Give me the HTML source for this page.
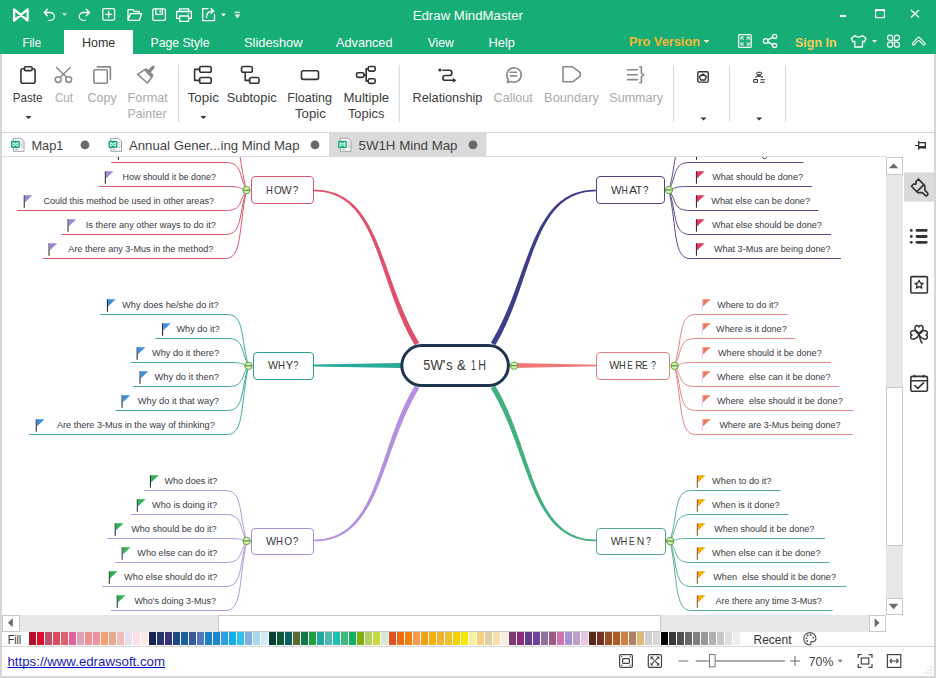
<!DOCTYPE html>
<html><head><meta charset="utf-8"><title>Edraw MindMaster</title>
<style>html,body{margin:0;padding:0;background:#fff;overflow:hidden}svg{display:block}text{font-family:"Liberation Sans",sans-serif;white-space:pre}</style>
</head><body>
<svg width="936" height="678" viewBox="0 0 936 678">
<rect x="0" y="0" width="936" height="54" fill="#16ad76"/>
<rect x="0" y="54" width="936" height="624" fill="#ffffff"/>
<rect x="64" y="30" width="69" height="24" fill="#ffffff"/>
<text x="412.7" y="19.9" font-size="13" fill="#ffffff" textLength="110.3" lengthAdjust="spacingAndGlyphs">Edraw MindMaster</text>
<text x="22.6" y="46.5" font-size="13" fill="#fff" textLength="18.4" lengthAdjust="spacingAndGlyphs">File</text>
<text x="82" y="46.5" font-size="13" fill="#333" textLength="33.3" lengthAdjust="spacingAndGlyphs">Home</text>
<text x="150.5" y="46.5" font-size="13" fill="#fff" textLength="59.1" lengthAdjust="spacingAndGlyphs">Page Style</text>
<text x="244" y="46.5" font-size="13" fill="#fff" textLength="58.5" lengthAdjust="spacingAndGlyphs">Slideshow</text>
<text x="336" y="46.5" font-size="13" fill="#fff" textLength="56.5" lengthAdjust="spacingAndGlyphs">Advanced</text>
<text x="427.7" y="46.5" font-size="13" fill="#fff" textLength="26.1" lengthAdjust="spacingAndGlyphs">View</text>
<text x="488.5" y="46.5" font-size="13" fill="#fff" textLength="26.4" lengthAdjust="spacingAndGlyphs">Help</text>
<text x="629" y="45.5" font-size="13" fill="#f5b731" font-weight="bold" textLength="71" lengthAdjust="spacingAndGlyphs">Pro Version</text>
<path d="M703.5,40 h6 l-3,3 z" fill="#f5e6c0"/>
<text x="795" y="46.7" font-size="13" fill="#f2cf5a" font-weight="bold" textLength="41.7" lengthAdjust="spacingAndGlyphs">Sign In</text>
<rect x="840" y="15" width="6" height="2" fill="#fff"/>
<rect x="875.6" y="9.6" width="8.8" height="8" fill="none" stroke="#fff" stroke-width="1.2"/>
<rect x="875" y="9" width="10" height="2" fill="#fff"/>
<path d="M911,10 L919,17.5 M919,10 L911,17.5" stroke="#fff" stroke-width="1.3"/>
<path d="M14.1,9.4 V20.6 L27.6,9.4 V20.6 Z" fill="none" stroke="#fff" stroke-width="2.3" stroke-linejoin="round"/>
<path d="M47.4,9.3 L44.2,12.5 L47.4,15.8 M44.2,12.5 H50.5 A3.9,3.9 0 0 1 50.5,20.3 H48.5" fill="none" stroke="#fff" stroke-width="1.3" stroke-linecap="round" stroke-linejoin="round"/>
<path d="M62,13.3 h5 l-2.5,2.8 z" fill="#cde9dc"/>
<path d="M86.3,9.3 L89.5,12.5 L86.3,15.8 M89.5,12.5 H83.2 A3.9,3.9 0 0 0 83.2,20.3 H85.2" fill="none" stroke="#fff" stroke-width="1.3" stroke-linecap="round" stroke-linejoin="round"/>
<rect x="102.8" y="8.6" width="11.8" height="11.6" rx="1.5" fill="none" stroke="#fff" stroke-width="1.3" stroke-linecap="round" stroke-linejoin="round"/>
<path d="M108.7,11.3 V17.3 M105.7,14.3 H111.7" fill="none" stroke="#fff" stroke-width="1.3" stroke-linecap="round" stroke-linejoin="round"/>
<path d="M139.3,13.2 V11.5 H134.3 L132.8,9.7 H128 V20.3 M128,20.3 L130.5,13.7 H141.6 L139.3,20.3 H128" fill="none" stroke="#fff" stroke-width="1.3" stroke-linecap="round" stroke-linejoin="round"/>
<rect x="152.8" y="8.8" width="12.6" height="11.6" rx="1.5" fill="none" stroke="#fff" stroke-width="1.3" stroke-linecap="round" stroke-linejoin="round"/>
<path d="M155.8,8.8 V14.3 H162.4 V8.8 M160.2,10.3 V12.3" fill="none" stroke="#fff" stroke-width="1.3" stroke-linecap="round" stroke-linejoin="round"/>
<path d="M179.6,11.5 V8.8 H188.6 V11.5 M179.6,18.3 H176.6 V11.5 H191.4 V18.3 H188.6" fill="none" stroke="#fff" stroke-width="1.3" stroke-linecap="round" stroke-linejoin="round"/>
<rect x="179.6" y="16" width="9" height="5.3" fill="none" stroke="#fff" stroke-width="1.3" stroke-linecap="round" stroke-linejoin="round"/>
<circle cx="188.3" cy="13.8" r="0.7" fill="#fff"/>
<path d="M208,8.7 H202.7 V20.7 H214.5 V14.5" fill="none" stroke="#fff" stroke-width="1.3" stroke-linecap="round" stroke-linejoin="round"/>
<path d="M206.5,17.5 C206.5,13.5 209,11 213.5,11 M211,8.5 L213.8,11 L211,13.5" fill="none" stroke="#fff" stroke-width="1.3" stroke-linecap="round" stroke-linejoin="round"/>
<path d="M221,13.6 h5 l-2.5,2.8 z" fill="#fff"/>
<path d="M234.8,12.4 h5.2" stroke="#e8f6ef" stroke-width="1.4"/><path d="M234.7,14.6 h5.4 l-2.7,4 z" fill="#fff"/>
<rect x="738.6" y="34.6" width="12.6" height="12.8" rx="1.2" fill="none" stroke="#fff" stroke-width="1.3" stroke-linecap="round" stroke-linejoin="round"/>
<path d="M741,39.8 V37 H743.8 M741.3,37.3 L743.8,39.8 M746.4,37 H749.2 V39.8 M748.9,37.3 L746.4,39.8 M741,42.2 V45 H743.8 M741.3,44.7 L743.8,42.2 M746.4,45 H749.2 V42.2 M748.9,44.7 L746.4,42.2" fill="none" stroke="#fff" stroke-width="1"/>
<circle cx="765.8" cy="41" r="2.4" fill="none" stroke="#fff" stroke-width="1.3" stroke-linecap="round" stroke-linejoin="round"/><circle cx="774.6" cy="36.4" r="2.1" fill="none" stroke="#fff" stroke-width="1.3" stroke-linecap="round" stroke-linejoin="round"/><circle cx="774.6" cy="45.6" r="2.1" fill="none" stroke="#fff" stroke-width="1.3" stroke-linecap="round" stroke-linejoin="round"/>
<path d="M767.9,39.9 L772.7,37.4 M767.9,42.1 L772.7,44.6" fill="none" stroke="#fff" stroke-width="1.3" stroke-linecap="round" stroke-linejoin="round"/>
<path d="M855,35.6 L851.3,38.5 L853,42 L854.8,41.2 V47 H862.5 V41.2 L864.3,42 L866,38.5 L862.3,35.6 C861,37.5 856.3,37.5 855,35.6 Z" fill="none" stroke="#fff" stroke-width="1.3" stroke-linecap="round" stroke-linejoin="round"/>
<path d="M872,40 h5 l-2.5,2.8 z" fill="#fff"/>
<path d="M892.6,40.300000000000004 H890.0500000000001 A2.55,2.55 0 1 1 892.6,37.75000000000001 Z" fill="none" stroke="#fff" stroke-width="1.2" stroke-linejoin="round"/>
<path d="M892.6,42.1 H890.0500000000001 A2.55,2.55 0 1 0 892.6,44.65 Z" fill="none" stroke="#fff" stroke-width="1.2" stroke-linejoin="round"/>
<path d="M894.4,40.300000000000004 H896.9499999999999 A2.55,2.55 0 1 0 894.4,37.75000000000001 Z" fill="none" stroke="#fff" stroke-width="1.2" stroke-linejoin="round"/>
<path d="M894.4,42.1 H896.9499999999999 A2.55,2.55 0 1 1 894.4,44.65 Z" fill="none" stroke="#fff" stroke-width="1.2" stroke-linejoin="round"/>
<path d="M913.5,43.8 L918.7,38.3 L923.9,43.8" fill="none" stroke="#fff" stroke-width="3.4" stroke-linejoin="round" stroke-linecap="round"/>
<path d="M913.5,43.8 L918.7,38.3 L923.9,43.8" fill="none" stroke="#16ad76" stroke-width="1.2" stroke-linejoin="round" stroke-linecap="round"/>
<rect x="0" y="132" width="936" height="1" fill="#d8d8d8"/>
<text x="12.8" y="101.5" font-size="13" fill="#3c3c3c" textLength="29.6" lengthAdjust="spacingAndGlyphs">Paste</text>
<text x="54.9" y="101.5" font-size="13" fill="#aaaaaa" textLength="18.0" lengthAdjust="spacingAndGlyphs">Cut</text>
<text x="87.5" y="101.5" font-size="13" fill="#aaaaaa" textLength="29.2" lengthAdjust="spacingAndGlyphs">Copy</text>
<text x="127.6" y="101.5" font-size="13" fill="#aaaaaa" textLength="40.3" lengthAdjust="spacingAndGlyphs">Format</text>
<text x="127.6" y="117.5" font-size="13" fill="#aaaaaa" textLength="38.9" lengthAdjust="spacingAndGlyphs">Painter</text>
<text x="187.6" y="101.5" font-size="13" fill="#3c3c3c" textLength="31.3" lengthAdjust="spacingAndGlyphs">Topic</text>
<text x="226.7" y="101.5" font-size="13" fill="#3c3c3c" textLength="50.0" lengthAdjust="spacingAndGlyphs">Subtopic</text>
<text x="287.3" y="101.5" font-size="13" fill="#3c3c3c" textLength="44.7" lengthAdjust="spacingAndGlyphs">Floating</text>
<text x="295" y="117.5" font-size="13" fill="#3c3c3c" textLength="30.8" lengthAdjust="spacingAndGlyphs">Topic</text>
<text x="343.5" y="101.5" font-size="13" fill="#3c3c3c" textLength="45.7" lengthAdjust="spacingAndGlyphs">Multiple</text>
<text x="347.9" y="117.5" font-size="13" fill="#3c3c3c" textLength="36.5" lengthAdjust="spacingAndGlyphs">Topics</text>
<text x="412.6" y="101.5" font-size="13" fill="#3c3c3c" textLength="69.7" lengthAdjust="spacingAndGlyphs">Relationship</text>
<text x="493.6" y="101.5" font-size="13" fill="#aaaaaa" textLength="39.2" lengthAdjust="spacingAndGlyphs">Callout</text>
<text x="544.1" y="101.5" font-size="13" fill="#aaaaaa" textLength="54.8" lengthAdjust="spacingAndGlyphs">Boundary</text>
<text x="609.3" y="101.5" font-size="13" fill="#aaaaaa" textLength="53.7" lengthAdjust="spacingAndGlyphs">Summary</text>
<rect x="178.1" y="65" width="1" height="57" fill="#d6d6d6"/>
<rect x="398.8" y="65" width="1" height="57" fill="#d6d6d6"/>
<rect x="673.0" y="65" width="1" height="57" fill="#d6d6d6"/>
<rect x="729.1" y="65" width="1" height="57" fill="#d6d6d6"/>
<rect x="785.0" y="65" width="1" height="57" fill="#d6d6d6"/>
<path d="M25.5,116.0 h6 l-3,3 z" fill="#333"/>
<path d="M200.3,116.0 h6 l-3,3 z" fill="#333"/>
<path d="M700.5,117.6 h6 l-3,3 z" fill="#333"/>
<path d="M756.2,117.6 h6 l-3,3 z" fill="#333"/>
<rect x="20.9" y="68.8" width="14.2" height="14.4" rx="2" fill="none" stroke="#333333" stroke-width="1.6" stroke-linecap="round" stroke-linejoin="round"/>
<rect x="24.5" y="66.8" width="7.6" height="3.8" rx="1.2" fill="#fff" stroke="#333333" stroke-width="1.6"/>
<path d="M56.5,67.5 L66.5,77.3 M70.3,67.5 L60.3,77.3" fill="none" stroke="#8a8a8a" stroke-width="1.6" stroke-linecap="round" stroke-linejoin="round"/><circle cx="58.2" cy="79.6" r="2.9" fill="none" stroke="#8a8a8a" stroke-width="1.6" stroke-linecap="round" stroke-linejoin="round"/><circle cx="68.7" cy="79.6" r="2.9" fill="none" stroke="#8a8a8a" stroke-width="1.6" stroke-linecap="round" stroke-linejoin="round"/>
<rect x="93.9" y="69.8" width="13.4" height="13.4" rx="1" fill="none" stroke="#8a8a8a" stroke-width="1.6" stroke-linecap="round" stroke-linejoin="round"/><path d="M97.4,66.9 H110.4 V79.2" fill="none" stroke="#8a8a8a" stroke-width="1.6" stroke-linecap="round" stroke-linejoin="round"/>
<path d="M137.6,74.3 L145.2,69.4 L152.4,76.2 L147.4,83 Z" fill="none" stroke="#8a8a8a" stroke-width="1.6" stroke-linecap="round" stroke-linejoin="round"/>
<path d="M144,70.3 L146.8,68.2 L153.6,74.8 L151,77.6 Z" fill="#8a8a8a"/>
<path d="M150,70.5 L153,67.3" stroke="#8a8a8a" stroke-width="3.4" stroke-linecap="round"/>
<rect x="199.6" y="66.5" width="11.6" height="5.8" rx="1.8" fill="none" stroke="#333333" stroke-width="1.6" stroke-linecap="round" stroke-linejoin="round"/><rect x="199.6" y="77.5" width="11.6" height="5.8" rx="1.8" fill="none" stroke="#333333" stroke-width="1.6" stroke-linecap="round" stroke-linejoin="round"/>
<path d="M199.6,69.4 H194.6 V80.4 H199.6" fill="none" stroke="#333333" stroke-width="1.6" stroke-linecap="round" stroke-linejoin="round"/>
<rect x="241.5" y="66.5" width="10.8" height="5.8" rx="1.8" fill="none" stroke="#333333" stroke-width="1.6" stroke-linecap="round" stroke-linejoin="round"/><rect x="249.6" y="77.5" width="9.4" height="5.8" rx="1.8" fill="none" stroke="#333333" stroke-width="1.6" stroke-linecap="round" stroke-linejoin="round"/>
<path d="M245.2,72.3 V80.4 H249.6" fill="none" stroke="#333333" stroke-width="1.6" stroke-linecap="round" stroke-linejoin="round"/>
<rect x="301.5" y="70.8" width="17" height="8.6" rx="1.8" fill="none" stroke="#333333" stroke-width="1.6" stroke-linecap="round" stroke-linejoin="round"/>
<rect x="356.5" y="72.8" width="7.5" height="4.6" rx="1.6" fill="none" stroke="#333333" stroke-width="1.6" stroke-linecap="round" stroke-linejoin="round"/><rect x="368.2" y="66.5" width="7" height="4.6" rx="1.6" fill="none" stroke="#333333" stroke-width="1.6" stroke-linecap="round" stroke-linejoin="round"/><rect x="368.2" y="78.8" width="7" height="4.6" rx="1.6" fill="none" stroke="#333333" stroke-width="1.6" stroke-linecap="round" stroke-linejoin="round"/>
<path d="M364,75.1 H366.2 M368.2,68.8 H366.2 V81.1 H368.2" fill="none" stroke="#333333" stroke-width="1.6" stroke-linecap="round" stroke-linejoin="round"/>
<circle cx="439.9" cy="70" r="1.6" fill="#333333"/>
<path d="M442.8,70.3 H449.3 A2.6,2.6 0 0 1 449.3,75.5 H445.3 A2.4,2.4 0 0 0 445.3,80.3 H453" fill="none" stroke="#333333" stroke-width="1.6" stroke-linecap="round" stroke-linejoin="round"/><path d="M452.8,77.9 L456.5,80.3 L452.8,82.7 Z" fill="#333333"/>
<path d="M507.2,82.6 L508.5,79.6 A7.2,7.2 0 1 1 511,81.5 Z" fill="none" stroke="#8a8a8a" stroke-width="1.6" stroke-linecap="round" stroke-linejoin="round"/><path d="M510.3,72.2 H516.5 M510.3,75.9 H516.5" fill="none" stroke="#8a8a8a" stroke-width="1.6" stroke-linecap="round" stroke-linejoin="round"/>
<path d="M563,66.8 H572.6 L580.2,72.7 V76.4 L572.6,81.8 H563 Z" fill="none" stroke="#8a8a8a" stroke-width="1.6" stroke-linecap="round" stroke-linejoin="round"/>
<path d="M627.5,69.7 H637.5 M627.5,74.8 H637.5 M627.5,79.6 H637.5" fill="none" stroke="#8a8a8a" stroke-width="1.6" stroke-linecap="round" stroke-linejoin="round"/><path d="M639.8,66.8 H641.4 V73.2 L643.8,74.8 L641.4,76.4 V82.6 H639.8" fill="none" stroke="#8a8a8a" stroke-width="1.6" stroke-linecap="round" stroke-linejoin="round"/>
<rect x="697.8" y="71.7" width="10.4" height="10.4" rx="1" fill="none" stroke="#333333" stroke-width="1.4"/>
<path d="M702.9,74.1 L706.4,76.6 L705,80 H700.8 L699.4,76.6 Z" fill="none" stroke="#333333" stroke-width="1.3" stroke-linejoin="round"/>
<rect x="756.8" y="72.3" width="4.6" height="2.3" rx="0.6" fill="none" stroke="#333333" stroke-width="1"/>
<path d="M758.2,74.6 H760 L762.4,77 H755.8 Z" fill="#555"/><circle cx="755.9" cy="77.1" r="0.8" fill="#333333"/><circle cx="762.3" cy="77.1" r="0.8" fill="#333333"/>
<rect x="753.7" y="79.5" width="3.8" height="2.8" rx="0.4" fill="none" stroke="#333333" stroke-width="1.1"/>
<path d="M760.3,79.7 H764.8 M760.3,82.2 H764.8" stroke="#333333" stroke-width="1.1"/>
<rect x="2" y="133" width="932" height="23" fill="#ffffff"/>
<rect x="329" y="132.5" width="157.5" height="23.5" fill="#dadada"/>
<rect x="0" y="156" width="886" height="1" fill="#dcdcdc"/>
<path d="M13.3,138.3 H21 L24,141.3 V151.3 H13.3 Z" fill="#fff" stroke="#a0a0a0" stroke-width="1"/>
<rect x="11" y="140.8" width="8.9" height="7.2" rx="1" fill="#1aa872"/>
<path d="M13,142.5 V146.3 L17.9,142.5 V146.3 Z" fill="none" stroke="#c8fff0" stroke-width="1.1" stroke-linejoin="round"/>
<path d="M20.8,142.8 H23 M20.8,145 H23 M20.8,147.2 H23 M15,149.5 H18" stroke="#a8a8a8" stroke-width="0.9"/>
<path d="M110.8,138.3 H118.5 L121.5,141.3 V151.3 H110.8 Z" fill="#fff" stroke="#a0a0a0" stroke-width="1"/>
<rect x="108.5" y="140.8" width="8.9" height="7.2" rx="1" fill="#1aa872"/>
<path d="M110.5,142.5 V146.3 L115.4,142.5 V146.3 Z" fill="none" stroke="#c8fff0" stroke-width="1.1" stroke-linejoin="round"/>
<path d="M118.3,142.8 H120.5 M118.3,145 H120.5 M118.3,147.2 H120.5 M112.5,149.5 H115.5" stroke="#a8a8a8" stroke-width="0.9"/>
<path d="M340.3,138.3 H348 L351,141.3 V151.3 H340.3 Z" fill="#fff" stroke="#a0a0a0" stroke-width="1"/>
<rect x="338" y="140.8" width="8.9" height="7.2" rx="1" fill="#1aa872"/>
<path d="M340,142.5 V146.3 L344.9,142.5 V146.3 Z" fill="none" stroke="#c8fff0" stroke-width="1.1" stroke-linejoin="round"/>
<path d="M347.8,142.8 H350 M347.8,145 H350 M347.8,147.2 H350 M342,149.5 H345" stroke="#a8a8a8" stroke-width="0.9"/>
<text x="31.4" y="149.5" font-size="13" fill="#444" textLength="32" lengthAdjust="spacingAndGlyphs">Map1</text>
<circle cx="85" cy="144.9" r="4.4" fill="#6a6a6a"/>
<text x="129" y="149.5" font-size="13" fill="#444" textLength="170.5" lengthAdjust="spacingAndGlyphs">Annual Gener...ing Mind Map</text>
<circle cx="315" cy="144.9" r="4.4" fill="#6a6a6a"/>
<text x="358.5" y="149.5" font-size="13" fill="#444" textLength="99" lengthAdjust="spacingAndGlyphs">5W1H Mind Map</text>
<circle cx="473" cy="144.9" r="4.4" fill="#6a6a6a"/>
<rect x="915" y="145" width="3.5" height="1" fill="#333"/><rect x="918" y="141" width="1.3" height="8.7" fill="#333"/><rect x="918" y="142" width="8" height="1.3" fill="#333"/><rect x="924.7" y="142" width="1.3" height="6.5" fill="#333"/><rect x="918" y="146" width="8" height="2.5" fill="#333"/>
<rect x="903" y="157" width="31" height="490" fill="#ffffff"/>
<rect x="904" y="172.4" width="30" height="29.2" fill="#dadada"/>
<g transform="translate(920.8,188.6) rotate(-45)"><path d="M-1.7,7.6 V4.6 C-1.7,2.6 -5,2.4 -5,0 V-8.3 H-1.8 L-0.2,-6.6 L1.4,-8.3 H5 V0 C5,2.4 1.7,2.6 1.7,4.6 V7.6 A1.7,1.7 0 0 1 -1.7,7.6 Z" fill="none" stroke="#333333" stroke-width="1.7" stroke-linejoin="round"/><path d="M-5,-0.6 H5" stroke="#333333" stroke-width="1.7"/></g>
<circle cx="911.3" cy="230.4" r="1.4" fill="#333333"/><rect x="915.6" y="229.0" width="12" height="2.8" rx="1.4" fill="#333333"/>
<circle cx="911.3" cy="236.5" r="1.4" fill="#333333"/><rect x="915.6" y="235.1" width="12" height="2.8" rx="1.4" fill="#333333"/>
<circle cx="911.3" cy="242.3" r="1.4" fill="#333333"/><rect x="915.6" y="240.9" width="12" height="2.8" rx="1.4" fill="#333333"/>
<rect x="910.8" y="276.6" width="16.6" height="16.4" rx="1" fill="none" stroke="#333333" stroke-width="1.6"/>
<path d="M919.1,280.3 L920.4,283 L923.3,283.3 L921.1,285.2 L921.8,288.1 L919.1,286.6 L916.4,288.1 L917.1,285.2 L914.9,283.3 L917.8,283 Z" fill="none" stroke="#333333" stroke-width="1.3" stroke-linejoin="round"/>
<path d="M919,334 C914,332 914,325.5 917,325.5 C918.5,325.5 919,327 919,327 C919,327 919.5,325.5 921,325.5 C924,325.5 924,332 919,334 Z" fill="none" stroke="#333333" stroke-width="1.5" stroke-linejoin="round"/>
<path d="M919,334 C917,329.5 910.6,329.5 910.6,333 C910.6,334.5 912,335 912,335 C912,335 910.6,335.7 910.6,337 C910.6,340.5 917,340 919,334 Z" fill="none" stroke="#333333" stroke-width="1.5" stroke-linejoin="round"/>
<path d="M919,334 C921,329.5 927.4,329.5 927.4,333 C927.4,334.5 926,335 926,335 C926,335 927.4,335.7 927.4,337 C927.4,340.5 921,340 919,334 Z" fill="none" stroke="#333333" stroke-width="1.5" stroke-linejoin="round"/>
<path d="M919,334 C919.5,338 920.5,341 922,343" fill="none" stroke="#333333" stroke-width="1.5" stroke-linecap="round"/>
<rect x="910.8" y="376.4" width="16.6" height="14.8" rx="1.5" fill="none" stroke="#333333" stroke-width="1.6"/>
<path d="M910.8,380.8 H927.4 M914.5,374.8 V377.5 M923.7,374.8 V377.5" stroke="#333333" stroke-width="1.6"/>
<path d="M914.8,385.5 L917.8,388.3 L923.5,382.8" fill="none" stroke="#333333" stroke-width="1.6" stroke-linejoin="round" stroke-linecap="round"/>
<rect x="886" y="157" width="17" height="458" fill="#e8e8e8"/>
<rect x="886.5" y="157.5" width="16" height="17" fill="#fff" stroke="#c8c8c8"/>
<path d="M888.8,168.3 L898.4,168.3 L893.6,163.6 Z" fill="#6a6a6a"/>
<rect x="886.5" y="387.5" width="16" height="158" fill="#fff" stroke="#c8c8c8"/>
<rect x="886.5" y="598.5" width="16" height="16" fill="#fff" stroke="#c8c8c8"/>
<path d="M888.8,603.8 L898.4,603.8 L893.6,609.2 Z" fill="#6a6a6a"/>
<rect x="2" y="615" width="884" height="17" fill="#e8e8e8"/>
<rect x="2.5" y="615.5" width="17" height="16" fill="#fff" stroke="#c8c8c8"/>
<path d="M12.8,618.2 L7.9,622.8 L12.8,627.3 Z" fill="#6a6a6a"/>
<rect x="218.5" y="615.5" width="442" height="16" fill="#fff" stroke="#c8c8c8"/>
<rect x="869.5" y="615.5" width="16" height="16" fill="#fff" stroke="#c8c8c8"/>
<path d="M874.6,618.2 L879.6,622.8 L874.6,627.4 Z" fill="#6a6a6a"/>
<text x="7.7" y="643.6" font-size="12.8" fill="#333" textLength="13.5" lengthAdjust="spacingAndGlyphs">Fill</text>
<rect x="29" y="632" width="7" height="13" fill="#b5102a"/>
<rect x="37" y="632" width="7" height="13" fill="#d9102a"/>
<rect x="45" y="632" width="7" height="13" fill="#c0506a"/>
<rect x="53" y="632" width="7" height="13" fill="#e04a60"/>
<rect x="61" y="632" width="7" height="13" fill="#e06070"/>
<rect x="69" y="632" width="7" height="13" fill="#e0609a"/>
<rect x="77" y="632" width="7" height="13" fill="#e0a0b8"/>
<rect x="85" y="632" width="7" height="13" fill="#f09090"/>
<rect x="93" y="632" width="7" height="13" fill="#f090a0"/>
<rect x="101" y="632" width="7" height="13" fill="#f8a070"/>
<rect x="109" y="632" width="7" height="13" fill="#eaa890"/>
<rect x="117" y="632" width="7" height="13" fill="#f0c0b8"/>
<rect x="125" y="632" width="7" height="13" fill="#e8e0f0"/>
<rect x="133" y="632" width="7" height="13" fill="#fde0e8"/>
<rect x="141" y="632" width="7" height="13" fill="#fde8e8"/>
<rect x="149" y="632" width="7" height="13" fill="#1a2450"/>
<rect x="157" y="632" width="7" height="13" fill="#283470"/>
<rect x="165" y="632" width="7" height="13" fill="#3a3080"/>
<rect x="173" y="632" width="7" height="13" fill="#1a4888"/>
<rect x="181" y="632" width="7" height="13" fill="#1a5fa0"/>
<rect x="189" y="632" width="7" height="13" fill="#3a58a0"/>
<rect x="197" y="632" width="7" height="13" fill="#5078c0"/>
<rect x="205" y="632" width="7" height="13" fill="#1a80c8"/>
<rect x="213" y="632" width="7" height="13" fill="#1a88d0"/>
<rect x="221" y="632" width="7" height="13" fill="#30a0e0"/>
<rect x="229" y="632" width="7" height="13" fill="#10b0f0"/>
<rect x="237" y="632" width="7" height="13" fill="#30c0f0"/>
<rect x="245" y="632" width="7" height="13" fill="#80b0e0"/>
<rect x="253" y="632" width="7" height="13" fill="#a8d8f0"/>
<rect x="261" y="632" width="7" height="13" fill="#d0ecf8"/>
<rect x="269" y="632" width="7" height="13" fill="#0a4030"/>
<rect x="277" y="632" width="7" height="13" fill="#0a5a38"/>
<rect x="285" y="632" width="7" height="13" fill="#0a6060"/>
<rect x="293" y="632" width="7" height="13" fill="#5a6a30"/>
<rect x="301" y="632" width="7" height="13" fill="#107a48"/>
<rect x="309" y="632" width="7" height="13" fill="#20a040"/>
<rect x="317" y="632" width="7" height="13" fill="#20a8a0"/>
<rect x="325" y="632" width="7" height="13" fill="#50b8b0"/>
<rect x="333" y="632" width="7" height="13" fill="#20c0b0"/>
<rect x="341" y="632" width="7" height="13" fill="#40b880"/>
<rect x="349" y="632" width="7" height="13" fill="#10b060"/>
<rect x="357" y="632" width="7" height="13" fill="#80b010"/>
<rect x="365" y="632" width="7" height="13" fill="#b0d060"/>
<rect x="373" y="632" width="7" height="13" fill="#c8d840"/>
<rect x="381" y="632" width="7" height="13" fill="#d8e8d0"/>
<rect x="389" y="632" width="7" height="13" fill="#e05020"/>
<rect x="397" y="632" width="7" height="13" fill="#f06a10"/>
<rect x="405" y="632" width="7" height="13" fill="#f08010"/>
<rect x="413" y="632" width="7" height="13" fill="#f89850"/>
<rect x="421" y="632" width="7" height="13" fill="#f0a010"/>
<rect x="429" y="632" width="7" height="13" fill="#f8b010"/>
<rect x="437" y="632" width="7" height="13" fill="#f8b030"/>
<rect x="445" y="632" width="7" height="13" fill="#f0c030"/>
<rect x="453" y="632" width="7" height="13" fill="#f8d000"/>
<rect x="461" y="632" width="7" height="13" fill="#f8e800"/>
<rect x="469" y="632" width="7" height="13" fill="#f8f0a0"/>
<rect x="477" y="632" width="7" height="13" fill="#f8d080"/>
<rect x="485" y="632" width="7" height="13" fill="#e0d0a0"/>
<rect x="493" y="632" width="7" height="13" fill="#f8e0b0"/>
<rect x="501" y="632" width="7" height="13" fill="#fdeee0"/>
<rect x="509" y="632" width="7" height="13" fill="#803870"/>
<rect x="517" y="632" width="7" height="13" fill="#902a80"/>
<rect x="525" y="632" width="7" height="13" fill="#6a3a90"/>
<rect x="533" y="632" width="7" height="13" fill="#7040a0"/>
<rect x="541" y="632" width="7" height="13" fill="#9070a0"/>
<rect x="549" y="632" width="7" height="13" fill="#a05880"/>
<rect x="557" y="632" width="7" height="13" fill="#d070b0"/>
<rect x="565" y="632" width="7" height="13" fill="#a890d8"/>
<rect x="573" y="632" width="7" height="13" fill="#c0a0c8"/>
<rect x="581" y="632" width="7" height="13" fill="#e8c8e0"/>
<rect x="589" y="632" width="7" height="13" fill="#5a2818"/>
<rect x="597" y="632" width="7" height="13" fill="#7a3020"/>
<rect x="605" y="632" width="7" height="13" fill="#985020"/>
<rect x="613" y="632" width="7" height="13" fill="#b05a20"/>
<rect x="621" y="632" width="7" height="13" fill="#d08040"/>
<rect x="629" y="632" width="7" height="13" fill="#b08060"/>
<rect x="637" y="632" width="7" height="13" fill="#e0b878"/>
<rect x="645" y="632" width="7" height="13" fill="#d0d0d0"/>
<rect x="653" y="632" width="7" height="13" fill="#d8d8d8"/>
<rect x="661" y="632" width="7" height="13" fill="#000000"/>
<rect x="669" y="632" width="7" height="13" fill="#383838"/>
<rect x="677" y="632" width="7" height="13" fill="#505050"/>
<rect x="685" y="632" width="7" height="13" fill="#686868"/>
<rect x="693" y="632" width="7" height="13" fill="#808080"/>
<rect x="701" y="632" width="7" height="13" fill="#989898"/>
<rect x="709" y="632" width="7" height="13" fill="#b0b0b0"/>
<rect x="717" y="632" width="7" height="13" fill="#c8c8c8"/>
<rect x="725" y="632" width="7" height="13" fill="#e0e0e0"/>
<rect x="733" y="632" width="7" height="13" fill="#eeeeee"/>
<rect x="741" y="632" width="7" height="13" fill="#ffffff"/>
<text x="753.5" y="643.6" font-size="13" fill="#333" textLength="38" lengthAdjust="spacingAndGlyphs">Recent</text>
<path d="M810,632.7 C813.5,632.7 815.9,635.3 815.9,638.4 C815.9,641.2 813.8,641.9 812.3,641.6 C811,641.4 810.3,642.3 810.8,643.3 C811.2,644.3 810.5,644.8 809.5,644.8 C806.2,644.8 803.7,642 803.7,638.6 C803.7,635.2 806.5,632.7 810,632.7 Z" fill="none" stroke="#555" stroke-width="1.2"/>
<circle cx="806.4" cy="638.2" r="0.95" fill="#555"/>
<circle cx="807.7" cy="635.5" r="0.95" fill="#555"/>
<circle cx="810.6" cy="635" r="0.95" fill="#555"/>
<circle cx="813.2" cy="637.6" r="0.95" fill="#555"/>
<circle cx="807.2" cy="641" r="0.95" fill="#555"/>
<rect x="2" y="646" width="932" height="1" fill="#d8d8d8"/>
<rect x="0" y="676" width="936" height="2" fill="#d6d6d6"/>
<text x="7.5" y="665.5" font-size="13" fill="#1c1cb0" textLength="157.5" lengthAdjust="spacingAndGlyphs">https://www.edrawsoft.com</text>
<rect x="7.5" y="667" width="157.5" height="1" fill="#0000d0"/>
<rect x="619.6" y="654.6" width="12.8" height="12.8" rx="1.3" fill="none" stroke="#444" stroke-width="1.2"/><rect x="622.6" y="658.7" width="6.8" height="4.6" rx="0.8" fill="none" stroke="#444" stroke-width="1.2"/><path d="M621.5,657.5 V656.5 H622.5 M630.5,657.5 V656.5 H629.5 M621.5,664.5 V665.5 H622.5 M630.5,664.5 V665.5 H629.5" fill="none" stroke="#444" stroke-width="0.8"/>
<rect x="648.3" y="654.6" width="13.2" height="12.8" rx="1.3" fill="none" stroke="#444" stroke-width="1.2"/><path d="M650.5,656.6 h3 l-3,3 z M659.3,656.6 h-3 l3,3 z M650.5,665.4 h3 l-3,-3 z M659.3,665.4 h-3 l3,-3 z" fill="#444"/><path d="M651.5,657.6 L654.5,660.6 M658.3,657.6 L655.3,660.6 M651.5,664.4 L654.5,661.4 M658.3,664.4 L655.3,661.4" stroke="#444" stroke-width="1.2"/>
<rect x="678.4" y="660.5" width="9.8" height="1" fill="#666"/>
<rect x="695.7" y="660.3" width="89.2" height="1.4" fill="#8a8a8a"/>
<rect x="709.5" y="654.5" width="5.6" height="12.3" fill="#fff" stroke="#777" stroke-width="1"/>
<path d="M790,661 H800 M795,656 V666" stroke="#666" stroke-width="1"/>
<text x="808.8" y="666" font-size="13" fill="#444" textLength="24.5" lengthAdjust="spacingAndGlyphs">70%</text>
<path d="M837.7,659.8 h5 l-2.5,2.8 z" fill="#777"/>
<path d="M858.2,658 V654.6 H861.6 M868.6,654.6 H872 V658 M872,664 V667.4 H868.6 M861.6,667.4 H858.2 V664" fill="none" stroke="#444" stroke-width="1.2"/><rect x="861.3" y="658" width="7.5" height="6" fill="none" stroke="#444" stroke-width="1.2"/>
<rect x="887.4" y="654.6" width="13.4" height="12.8" fill="none" stroke="#444" stroke-width="1.2"/><path d="M889.8,661 H898.4 M889.8,661 l2,-2 M889.8,661 l2,2 M898.4,661 l-2,-2 M898.4,661 l-2,2" fill="none" stroke="#444" stroke-width="1.1"/>
<rect x="930.4" y="672.4" width="1.2" height="1.2" fill="#c0c0c0"/>
<rect x="927.4" y="672.4" width="1.2" height="1.2" fill="#c0c0c0"/>
<rect x="924.4" y="672.4" width="1.2" height="1.2" fill="#c0c0c0"/>
<rect x="930.4" y="669.4" width="1.2" height="1.2" fill="#c0c0c0"/>
<rect x="927.4" y="669.4" width="1.2" height="1.2" fill="#c0c0c0"/>
<rect x="930.4" y="666.4" width="1.2" height="1.2" fill="#c0c0c0"/>
<rect x="0" y="54" width="2" height="624" fill="#d6d6d6"/>
<rect x="934" y="54" width="2" height="624" fill="#d6d6d6"/>
<defs><clipPath id="cv"><rect x="2" y="157" width="884" height="458"/></clipPath></defs>
<g clip-path="url(#cv)">
<path d="M314.00,191.30 L317.20,191.40 L320.29,191.65 L323.27,192.04 L326.14,192.56 L328.91,193.22 L331.57,194.00 L334.14,194.92 L336.61,195.95 L338.99,197.11 L341.29,198.38 L343.50,199.76 L345.63,201.26 L347.69,202.86 L349.67,204.57 L351.58,206.38 L353.43,208.29 L355.21,210.30 L356.94,212.40 L358.61,214.59 L360.22,216.88 L361.79,219.24 L363.30,221.69 L364.77,224.22 L366.20,226.83 L367.59,229.51 L368.94,232.26 L370.26,235.08 L371.55,237.96 L372.82,240.90 L374.05,243.90 L375.27,246.96 L376.47,250.07 L377.65,253.22 L378.82,256.43 L379.98,259.67 L381.13,262.95 L382.28,266.27 L383.43,269.63 L384.58,273.01 L385.74,276.42 L386.91,279.85 L388.08,283.30 L389.27,286.77 L390.48,290.26 L391.71,293.75 L392.97,297.25 L394.25,300.76 L395.56,304.27 L396.90,307.78 L398.28,311.28 L399.70,314.77 L401.17,318.26 L402.67,321.73 L404.23,325.18 L405.84,328.61 L407.50,332.02 L409.23,335.40 L411.01,338.75 L412.86,342.07 L414.78,345.35 L419.22,342.65 L417.30,339.49 L415.45,336.29 L413.66,333.05 L411.92,329.77 L410.24,326.46 L408.61,323.12 L407.03,319.76 L405.49,316.37 L404.00,312.96 L402.54,309.54 L401.12,306.10 L399.74,302.65 L398.38,299.20 L397.06,295.74 L395.75,292.28 L394.48,288.83 L393.21,285.38 L391.97,281.94 L390.74,278.51 L389.52,275.10 L388.30,271.71 L387.09,268.34 L385.89,265.00 L384.67,261.69 L383.46,258.41 L382.23,255.16 L381.00,251.95 L379.75,248.79 L378.48,245.67 L377.20,242.60 L375.88,239.58 L374.55,236.61 L373.18,233.71 L371.78,230.86 L370.35,228.08 L368.87,225.37 L367.35,222.73 L365.79,220.17 L364.18,217.68 L362.52,215.27 L360.80,212.95 L359.03,210.72 L357.19,208.58 L355.29,206.53 L353.32,204.59 L351.29,202.74 L349.18,201.01 L346.99,199.38 L344.73,197.87 L342.39,196.47 L339.96,195.20 L337.45,194.05 L334.85,193.03 L332.16,192.14 L329.38,191.38 L326.51,190.76 L323.53,190.28 L320.46,189.94 L317.28,189.74 L314.00,189.70 Z" fill="#e0506a"/>
<path d="M596.00,189.70 L592.72,189.74 L589.54,189.94 L586.47,190.28 L583.49,190.76 L580.62,191.38 L577.84,192.14 L575.15,193.03 L572.55,194.05 L570.04,195.20 L567.61,196.47 L565.27,197.87 L563.01,199.38 L560.82,201.01 L558.71,202.74 L556.68,204.59 L554.71,206.53 L552.81,208.58 L550.97,210.72 L549.20,212.95 L547.48,215.27 L545.82,217.68 L544.21,220.17 L542.65,222.73 L541.13,225.37 L539.65,228.08 L538.22,230.86 L536.82,233.71 L535.45,236.61 L534.12,239.58 L532.80,242.60 L531.52,245.67 L530.25,248.79 L529.00,251.95 L527.77,255.16 L526.54,258.41 L525.33,261.69 L524.11,265.00 L522.91,268.34 L521.70,271.71 L520.48,275.10 L519.26,278.51 L518.03,281.94 L516.79,285.38 L515.52,288.83 L514.25,292.28 L512.94,295.74 L511.62,299.20 L510.26,302.65 L508.88,306.10 L507.46,309.54 L506.00,312.96 L504.51,316.37 L502.97,319.76 L501.39,323.12 L499.76,326.46 L498.08,329.77 L496.34,333.05 L494.55,336.29 L492.70,339.49 L490.78,342.65 L495.22,345.35 L497.14,342.07 L498.99,338.75 L500.77,335.40 L502.50,332.02 L504.16,328.61 L505.77,325.18 L507.33,321.73 L508.83,318.26 L510.30,314.77 L511.72,311.28 L513.10,307.78 L514.44,304.27 L515.75,300.76 L517.03,297.25 L518.29,293.75 L519.52,290.26 L520.73,286.77 L521.92,283.30 L523.09,279.85 L524.26,276.42 L525.42,273.01 L526.57,269.63 L527.72,266.27 L528.87,262.95 L530.02,259.67 L531.18,256.43 L532.35,253.22 L533.53,250.07 L534.73,246.96 L535.95,243.90 L537.18,240.90 L538.45,237.96 L539.74,235.08 L541.06,232.26 L542.41,229.51 L543.80,226.83 L545.23,224.22 L546.70,221.69 L548.21,219.24 L549.78,216.88 L551.39,214.59 L553.06,212.40 L554.79,210.30 L556.57,208.29 L558.42,206.38 L560.33,204.57 L562.31,202.86 L564.37,201.26 L566.50,199.76 L568.71,198.38 L571.01,197.11 L573.39,195.95 L575.86,194.92 L578.43,194.00 L581.09,193.22 L583.86,192.56 L586.73,192.04 L589.71,191.65 L592.80,191.40 L596.00,191.30 Z" fill="#3c3f88"/>
<path d="M314.00,541.30 L317.28,541.26 L320.46,541.06 L323.53,540.72 L326.51,540.24 L329.38,539.62 L332.16,538.86 L334.85,537.97 L337.45,536.95 L339.96,535.80 L342.39,534.53 L344.73,533.13 L346.99,531.62 L349.18,529.99 L351.29,528.26 L353.32,526.41 L355.29,524.47 L357.19,522.42 L359.03,520.28 L360.80,518.05 L362.52,515.73 L364.18,513.32 L365.79,510.83 L367.35,508.27 L368.87,505.63 L370.35,502.92 L371.78,500.14 L373.18,497.29 L374.55,494.39 L375.88,491.42 L377.20,488.40 L378.48,485.33 L379.75,482.21 L381.00,479.05 L382.23,475.84 L383.46,472.59 L384.67,469.31 L385.89,466.00 L387.09,462.66 L388.30,459.29 L389.52,455.90 L390.74,452.49 L391.97,449.06 L393.21,445.62 L394.48,442.17 L395.75,438.72 L397.06,435.26 L398.38,431.80 L399.74,428.35 L401.12,424.90 L402.54,421.46 L404.00,418.04 L405.49,414.63 L407.03,411.24 L408.61,407.88 L410.24,404.54 L411.92,401.23 L413.66,397.95 L415.45,394.71 L417.30,391.51 L419.22,388.35 L414.78,385.65 L412.86,388.93 L411.01,392.25 L409.23,395.60 L407.50,398.98 L405.84,402.39 L404.23,405.82 L402.67,409.27 L401.17,412.74 L399.70,416.23 L398.28,419.72 L396.90,423.22 L395.56,426.73 L394.25,430.24 L392.97,433.75 L391.71,437.25 L390.48,440.74 L389.27,444.23 L388.08,447.70 L386.91,451.15 L385.74,454.58 L384.58,457.99 L383.43,461.37 L382.28,464.73 L381.13,468.05 L379.98,471.33 L378.82,474.57 L377.65,477.78 L376.47,480.93 L375.27,484.04 L374.05,487.10 L372.82,490.10 L371.55,493.04 L370.26,495.92 L368.94,498.74 L367.59,501.49 L366.20,504.17 L364.77,506.78 L363.30,509.31 L361.79,511.76 L360.22,514.12 L358.61,516.41 L356.94,518.60 L355.21,520.70 L353.43,522.71 L351.58,524.62 L349.67,526.43 L347.69,528.14 L345.63,529.74 L343.50,531.24 L341.29,532.62 L338.99,533.89 L336.61,535.05 L334.14,536.08 L331.57,537.00 L328.91,537.78 L326.14,538.44 L323.27,538.96 L320.29,539.35 L317.20,539.60 L314.00,539.70 Z" fill="#b48ee0"/>
<path d="M596.00,539.70 L592.80,539.60 L589.71,539.35 L586.73,538.96 L583.86,538.44 L581.09,537.78 L578.43,537.00 L575.86,536.08 L573.39,535.05 L571.01,533.89 L568.71,532.62 L566.50,531.24 L564.37,529.74 L562.31,528.14 L560.33,526.43 L558.42,524.62 L556.57,522.71 L554.79,520.70 L553.06,518.60 L551.39,516.41 L549.78,514.12 L548.21,511.76 L546.70,509.31 L545.23,506.78 L543.80,504.17 L542.41,501.49 L541.06,498.74 L539.74,495.92 L538.45,493.04 L537.18,490.10 L535.95,487.10 L534.73,484.04 L533.53,480.93 L532.35,477.78 L531.18,474.57 L530.02,471.33 L528.87,468.05 L527.72,464.73 L526.57,461.37 L525.42,457.99 L524.26,454.58 L523.09,451.15 L521.92,447.70 L520.73,444.23 L519.52,440.74 L518.29,437.25 L517.03,433.75 L515.75,430.24 L514.44,426.73 L513.10,423.22 L511.72,419.72 L510.30,416.23 L508.83,412.74 L507.33,409.27 L505.77,405.82 L504.16,402.39 L502.50,398.98 L500.77,395.60 L498.99,392.25 L497.14,388.93 L495.22,385.65 L490.78,388.35 L492.70,391.51 L494.55,394.71 L496.34,397.95 L498.08,401.23 L499.76,404.54 L501.39,407.88 L502.97,411.24 L504.51,414.63 L506.00,418.04 L507.46,421.46 L508.88,424.90 L510.26,428.35 L511.62,431.80 L512.94,435.26 L514.25,438.72 L515.52,442.17 L516.79,445.62 L518.03,449.06 L519.26,452.49 L520.48,455.90 L521.70,459.29 L522.91,462.66 L524.11,466.00 L525.33,469.31 L526.54,472.59 L527.77,475.84 L529.00,479.05 L530.25,482.21 L531.52,485.33 L532.80,488.40 L534.12,491.42 L535.45,494.39 L536.82,497.29 L538.22,500.14 L539.65,502.92 L541.13,505.63 L542.65,508.27 L544.21,510.83 L545.82,513.32 L547.48,515.73 L549.20,518.05 L550.97,520.28 L552.81,522.42 L554.71,524.47 L556.68,526.41 L558.71,528.26 L560.82,529.99 L563.01,531.62 L565.27,533.13 L567.61,534.53 L570.04,535.80 L572.55,536.95 L575.15,537.97 L577.84,538.86 L580.62,539.62 L583.49,540.24 L586.47,540.72 L589.54,541.06 L592.72,541.26 L596.00,541.30 Z" fill="#3fb07e"/>
<path d="M314,364.6 L401,362.9 L401,368.1 L314,366.4 Z" fill="#2aaa98"/>
<path d="M514,362.9 L596.5,364.8 L596.5,366.2 L514,368.1 Z" fill="#f07878"/>
<rect x="401.8" y="345.6" width="106.6" height="40" rx="20" fill="#fff" stroke="#1e3550" stroke-width="3"/>
<text transform="translate(423.19,369.8) scale(0.902,1)" font-size="14" fill="#3a3a3a">5</text>
<text transform="translate(430.45,369.8) scale(0.938,1)" font-size="14" fill="#3a3a3a">W</text>
<text transform="translate(442.26,369.8) scale(1.082,1)" font-size="14" fill="#3a3a3a">’</text>
<text transform="translate(446.25,369.8) scale(0.915,1)" font-size="14" fill="#3a3a3a">s</text>
<text transform="translate(456.93,369.8) scale(0.949,1)" font-size="14" fill="#3a3a3a">&</text>
<text transform="translate(470.93,369.8) scale(0.628,1)" font-size="14" fill="#3a3a3a">1</text>
<text transform="translate(478.22,369.8) scale(0.767,1)" font-size="14" fill="#3a3a3a">H</text>
<circle cx="514.1" cy="365.7" r="3.7" fill="#d6f6b4" stroke="#5a9632" stroke-width="0.9"/>
<path d="M510.6,365.7 H517.6" stroke="#4a8a2a" stroke-width="1.1"/>
<path d="M246.5,190.2 C238.5,161.76 242.5,138.5 225.5,138.5 H111" fill="none" stroke="#d65a6c" stroke-width="1"/>
<rect x="117.5" y="123.2" width="1.1" height="12.6" fill="#3a3030"/>
<path d="M118.6,123.3 H126.3 L118.6,130.5 Z" fill="#9a88d8"/>
<path d="M246.5,190.2 C238.5,174.97 242.5,162.5 225.5,162.5 H111.2" fill="none" stroke="#d65a6c" stroke-width="1"/>
<rect x="117.9" y="147.2" width="1.1" height="12.6" fill="#3a3030"/>
<path d="M119.0,147.3 H126.7 L119.0,154.5 Z" fill="#9a88d8"/>
<path d="M246.5,190.2 C238.5,188.16 242.5,186.5 225.5,186.5 H98.6" fill="none" stroke="#d65a6c" stroke-width="1"/>
<rect x="104.8" y="171.2" width="1.1" height="12.6" fill="#3a3030"/>
<path d="M105.89999999999999,171.3 H113.6 L105.89999999999999,178.5 Z" fill="#9a88d8"/>
<text x="122.6" y="179.5" font-size="9.6" fill="#3a3a44" textLength="93.3" lengthAdjust="spacingAndGlyphs">How should it be done?</text>
<path d="M246.5,190.2 C238.5,201.37 242.5,210.5 225.5,210.5 H17.2" fill="none" stroke="#d65a6c" stroke-width="1"/>
<rect x="23.7" y="195.2" width="1.1" height="12.6" fill="#3a3030"/>
<path d="M24.8,195.3 H32.5 L24.8,202.5 Z" fill="#9a88d8"/>
<text x="43.4" y="203.5" font-size="9.6" fill="#3a3a44" textLength="170.6" lengthAdjust="spacingAndGlyphs">Could this method be used in other areas?</text>
<path d="M246.5,190.2 C238.5,214.56 242.5,234.5 225.5,234.5 H61.4" fill="none" stroke="#d65a6c" stroke-width="1"/>
<rect x="67.5" y="219.2" width="1.1" height="12.6" fill="#3a3030"/>
<path d="M68.6,219.3 H76.3 L68.6,226.5 Z" fill="#9a88d8"/>
<text x="85.8" y="227.5" font-size="9.6" fill="#3a3a44" textLength="130.1" lengthAdjust="spacingAndGlyphs">Is there any other ways to do it?</text>
<path d="M246.5,190.2 C238.5,227.76 242.5,258.5 225.5,258.5 H42.5" fill="none" stroke="#d65a6c" stroke-width="1"/>
<rect x="48.5" y="243.2" width="1.1" height="12.6" fill="#3a3030"/>
<path d="M49.6,243.3 H57.3 L49.6,250.5 Z" fill="#9a88d8"/>
<text x="68.2" y="251.5" font-size="9.6" fill="#3a3a44" textLength="145.2" lengthAdjust="spacingAndGlyphs">Are there any 3-Mus in the method?</text>
<rect x="251.5" y="176.5" width="62.0" height="27.0" rx="3.5" fill="#fff" stroke="#d05a70" stroke-width="1"/>
<text transform="translate(265.92,193.7) scale(0.847,1)" font-size="11.2" fill="#383838">H</text>
<text transform="translate(273.93,193.7) scale(0.889,1)" font-size="11.2" fill="#383838">O</text>
<text transform="translate(281.16,193.7) scale(0.981,1)" font-size="11.2" fill="#383838">W</text>
<text transform="translate(292.80,193.7) scale(0.876,1)" font-size="11.2" fill="#383838">?</text>
<circle cx="246.5" cy="190.2" r="3.7" fill="#d6f6b4" stroke="#5a9632" stroke-width="0.9"/>
<path d="M243.0,190.2 H250.0" stroke="#4a8a2a" stroke-width="1.1"/>
<path d="M669,190 C677,161.68 673,138.5 690,138.5 H803" fill="none" stroke="#50508a" stroke-width="1"/>
<rect x="696.0" y="123.2" width="1.1" height="12.6" fill="#3a3030"/>
<path d="M697.1,123.3 H704.8 L697.1,130.5 Z" fill="#e03a60"/>
<path d="M669,190 C677,174.88 673,162.5 690,162.5 H803.4" fill="none" stroke="#50508a" stroke-width="1"/>
<rect x="696.0" y="147.2" width="1.1" height="12.6" fill="#3a3030"/>
<path d="M697.1,147.3 H704.8 L697.1,154.5 Z" fill="#e03a60"/>
<path d="M669,190 C677,188.07 673,186.5 690,186.5 H812" fill="none" stroke="#50508a" stroke-width="1"/>
<rect x="695.9" y="171.2" width="1.1" height="12.6" fill="#3a3030"/>
<path d="M697.0,171.3 H704.6999999999999 L697.0,178.5 Z" fill="#e03a60"/>
<text x="712.2" y="179.5" font-size="9.6" fill="#3a3a44" textLength="90.8" lengthAdjust="spacingAndGlyphs">What should be done?</text>
<path d="M669,190 C677,201.28 673,210.5 690,210.5 H818.5" fill="none" stroke="#50508a" stroke-width="1"/>
<rect x="695.9" y="195.2" width="1.1" height="12.6" fill="#3a3030"/>
<path d="M697.0,195.3 H704.6999999999999 L697.0,202.5 Z" fill="#e03a60"/>
<text x="711.3" y="203.5" font-size="9.6" fill="#3a3a44" textLength="98.7" lengthAdjust="spacingAndGlyphs">What else can be done?</text>
<path d="M669,190 C677,214.47 673,234.5 690,234.5 H831" fill="none" stroke="#50508a" stroke-width="1"/>
<rect x="695.9" y="219.2" width="1.1" height="12.6" fill="#3a3030"/>
<path d="M697.0,219.3 H704.6999999999999 L697.0,226.5 Z" fill="#e03a60"/>
<text x="712" y="227.5" font-size="9.6" fill="#3a3a44" textLength="109.8" lengthAdjust="spacingAndGlyphs">What else should be done?</text>
<path d="M669,190 C677,227.68 673,258.5 690,258.5 H841" fill="none" stroke="#50508a" stroke-width="1"/>
<rect x="695.9" y="243.2" width="1.1" height="12.6" fill="#3a3030"/>
<path d="M697.0,243.3 H704.6999999999999 L697.0,250.5 Z" fill="#e03a60"/>
<text x="714" y="251.5" font-size="9.6" fill="#3a3a44" textLength="116.6" lengthAdjust="spacingAndGlyphs">What 3-Mus are being done?</text>
<rect x="596.5" y="176.5" width="68.0" height="27.0" rx="3.5" fill="#fff" stroke="#4a4a80" stroke-width="1"/>
<text transform="translate(611.06,193.6) scale(1.001,1)" font-size="11.2" fill="#383838">W</text>
<text transform="translate(621.38,193.6) scale(0.783,1)" font-size="11.2" fill="#383838">H</text>
<text transform="translate(628.88,193.6) scale(1.077,1)" font-size="11.2" fill="#383838">A</text>
<text transform="translate(635.46,193.6) scale(0.978,1)" font-size="11.2" fill="#383838">T</text>
<text transform="translate(642.90,193.6) scale(0.876,1)" font-size="11.2" fill="#383838">?</text>
<circle cx="669" cy="190" r="3.7" fill="#d6f6b4" stroke="#5a9632" stroke-width="0.9"/>
<path d="M665.5,190 H672.5" stroke="#4a8a2a" stroke-width="1.1"/>
<path d="M248.5,365.8 C240.5,337.58 244.5,314.5 227.5,314.5 H100.3" fill="none" stroke="#40a8a0" stroke-width="1"/>
<rect x="106.9" y="299.2" width="1.1" height="12.6" fill="#302a30"/>
<path d="M108.0,299.3 H115.7 L108.0,306.5 Z" fill="#3a90e0"/>
<text x="122.1" y="307.5" font-size="9.6" fill="#3a3a44" textLength="96.5" lengthAdjust="spacingAndGlyphs">Why does he/she do it?</text>
<path d="M248.5,365.8 C240.5,350.79 244.5,338.5 227.5,338.5 H155.3" fill="none" stroke="#40a8a0" stroke-width="1"/>
<rect x="162.0" y="323.2" width="1.1" height="12.6" fill="#302a30"/>
<path d="M163.1,323.3 H170.8 L163.1,330.5 Z" fill="#3a90e0"/>
<text x="176.4" y="331.5" font-size="9.6" fill="#3a3a44" textLength="43.3" lengthAdjust="spacingAndGlyphs">Why do it?</text>
<path d="M248.5,365.8 C240.5,363.99 244.5,362.5 227.5,362.5 H130.6" fill="none" stroke="#40a8a0" stroke-width="1"/>
<rect x="136.6" y="347.2" width="1.1" height="12.6" fill="#302a30"/>
<path d="M137.7,347.3 H145.4 L137.7,354.5 Z" fill="#3a90e0"/>
<text x="152" y="355.5" font-size="9.6" fill="#3a3a44" textLength="67" lengthAdjust="spacingAndGlyphs">Why do it there?</text>
<path d="M248.5,365.8 C240.5,377.19 244.5,386.5 227.5,386.5 H133.3" fill="none" stroke="#40a8a0" stroke-width="1"/>
<rect x="139.5" y="371.2" width="1.1" height="12.6" fill="#302a30"/>
<path d="M140.6,371.3 H148.3 L140.6,378.5 Z" fill="#3a90e0"/>
<text x="154.6" y="379.5" font-size="9.6" fill="#3a3a44" textLength="64.4" lengthAdjust="spacingAndGlyphs">Why do it then?</text>
<path d="M248.5,365.8 C240.5,390.38 244.5,410.5 227.5,410.5 H115.4" fill="none" stroke="#40a8a0" stroke-width="1"/>
<rect x="121.5" y="395.2" width="1.1" height="12.6" fill="#302a30"/>
<path d="M122.6,395.3 H130.3 L122.6,402.5 Z" fill="#3a90e0"/>
<text x="137.8" y="403.5" font-size="9.6" fill="#3a3a44" textLength="81.2" lengthAdjust="spacingAndGlyphs">Why do it that way?</text>
<path d="M248.5,365.8 C240.5,403.59 244.5,434.5 227.5,434.5 H29.4" fill="none" stroke="#40a8a0" stroke-width="1"/>
<rect x="35.7" y="419.2" width="1.1" height="12.6" fill="#302a30"/>
<path d="M36.800000000000004,419.3 H44.5 L36.800000000000004,426.5 Z" fill="#3a90e0"/>
<text x="57" y="427.5" font-size="9.6" fill="#3a3a44" textLength="157.7" lengthAdjust="spacingAndGlyphs">Are there 3-Mus in the way of thinking?</text>
<rect x="253.5" y="352.5" width="60.0" height="27.0" rx="3.5" fill="#fff" stroke="#2a9a8a" stroke-width="1"/>
<text transform="translate(268.06,368.7) scale(0.953,1)" font-size="11.2" fill="#383838">W</text>
<text transform="translate(277.91,368.7) scale(0.863,1)" font-size="11.2" fill="#383838">H</text>
<text transform="translate(285.54,368.7) scale(1.046,1)" font-size="11.2" fill="#383838">Y</text>
<text transform="translate(293.55,368.7) scale(0.764,1)" font-size="11.2" fill="#383838">?</text>
<circle cx="248.5" cy="365.8" r="3.7" fill="#d6f6b4" stroke="#5a9632" stroke-width="0.9"/>
<path d="M245.0,365.8 H252.0" stroke="#4a8a2a" stroke-width="1.1"/>
<path d="M674.6,365.8 C682.6,337.58 678.6,314.5 695.6,314.5 H787.4" fill="none" stroke="#e08888" stroke-width="1"/>
<rect x="701.8" y="299.2" width="1.1" height="12.6" fill="#dcdcec"/>
<path d="M702.9,299.3 H710.5999999999999 L702.9,306.5 Z" fill="#f47a5a"/>
<text x="717.2" y="307.5" font-size="9.6" fill="#3a3a44" textLength="61.3" lengthAdjust="spacingAndGlyphs">Where to do it?</text>
<path d="M674.6,365.8 C682.6,350.79 678.6,338.5 695.6,338.5 H795" fill="none" stroke="#e08888" stroke-width="1"/>
<rect x="701.8" y="323.2" width="1.1" height="12.6" fill="#dcdcec"/>
<path d="M702.9,323.3 H710.5999999999999 L702.9,330.5 Z" fill="#f47a5a"/>
<text x="716.1" y="331.5" font-size="9.6" fill="#3a3a44" textLength="70.6" lengthAdjust="spacingAndGlyphs">Where is it done?</text>
<path d="M674.6,365.8 C682.6,363.99 678.6,362.5 695.6,362.5 H831" fill="none" stroke="#e08888" stroke-width="1"/>
<rect x="701.8" y="347.2" width="1.1" height="12.6" fill="#dcdcec"/>
<path d="M702.9,347.3 H710.5999999999999 L702.9,354.5 Z" fill="#f47a5a"/>
<text x="718" y="355.5" font-size="9.6" fill="#3a3a44" textLength="103.7" lengthAdjust="spacingAndGlyphs">Where should it be done?</text>
<path d="M674.6,365.8 C682.6,377.19 678.6,386.5 695.6,386.5 H839.4" fill="none" stroke="#e08888" stroke-width="1"/>
<rect x="701.8" y="371.2" width="1.1" height="12.6" fill="#dcdcec"/>
<path d="M702.9,371.3 H710.5999999999999 L702.9,378.5 Z" fill="#f47a5a"/>
<text x="717" y="379.5" font-size="9.6" fill="#3a3a44" textLength="113.5" lengthAdjust="spacingAndGlyphs">Where  else can it be done?</text>
<path d="M674.6,365.8 C682.6,390.38 678.6,410.5 695.6,410.5 H853.3" fill="none" stroke="#e08888" stroke-width="1"/>
<rect x="701.8" y="395.2" width="1.1" height="12.6" fill="#dcdcec"/>
<path d="M702.9,395.3 H710.5999999999999 L702.9,402.5 Z" fill="#f47a5a"/>
<text x="717" y="403.5" font-size="9.6" fill="#3a3a44" textLength="125.7" lengthAdjust="spacingAndGlyphs">Where  else should it be done?</text>
<path d="M674.6,365.8 C682.6,403.59 678.6,434.5 695.6,434.5 H852.7" fill="none" stroke="#e08888" stroke-width="1"/>
<rect x="701.8" y="419.2" width="1.1" height="12.6" fill="#dcdcec"/>
<path d="M702.9,419.3 H710.5999999999999 L702.9,426.5 Z" fill="#f47a5a"/>
<text x="719.4" y="427.5" font-size="9.6" fill="#3a3a44" textLength="121.1" lengthAdjust="spacingAndGlyphs">Where are 3-Mus being done?</text>
<rect x="596.5" y="352.5" width="73.0" height="27.0" rx="3.5" fill="#fff" stroke="#e08080" stroke-width="1"/>
<text transform="translate(609.16,368.7) scale(0.962,1)" font-size="11.2" fill="#383838">W</text>
<text transform="translate(619.04,368.7) scale(0.831,1)" font-size="11.2" fill="#383838">H</text>
<text transform="translate(627.24,368.7) scale(0.723,1)" font-size="11.2" fill="#383838">E</text>
<text transform="translate(635.16,368.7) scale(0.917,1)" font-size="11.2" fill="#383838">R</text>
<text transform="translate(641.89,368.7) scale(0.773,1)" font-size="11.2" fill="#383838">E</text>
<text transform="translate(651.26,368.7) scale(0.746,1)" font-size="11.2" fill="#383838">?</text>
<circle cx="674.6" cy="365.8" r="3.7" fill="#d6f6b4" stroke="#5a9632" stroke-width="0.9"/>
<path d="M671.1,365.8 H678.1" stroke="#4a8a2a" stroke-width="1.1"/>
<path d="M246.7,540.9 C238.7,513.18 242.7,490.5 225.7,490.5 H143.7" fill="none" stroke="#b098d8" stroke-width="1"/>
<rect x="149.9" y="475.2" width="1.1" height="12.6" fill="#303a30"/>
<path d="M151.0,475.3 H158.70000000000002 L151.0,482.5 Z" fill="#30b050"/>
<text x="164.4" y="483.5" font-size="9.6" fill="#3a3a44" textLength="53.0" lengthAdjust="spacingAndGlyphs">Who does it?</text>
<path d="M246.7,540.9 C238.7,526.38 242.7,514.5 225.7,514.5 H130.7" fill="none" stroke="#b098d8" stroke-width="1"/>
<rect x="136.8" y="499.2" width="1.1" height="12.6" fill="#303a30"/>
<path d="M137.9,499.3 H145.60000000000002 L137.9,506.5 Z" fill="#30b050"/>
<text x="152.1" y="507.5" font-size="9.6" fill="#3a3a44" textLength="64.9" lengthAdjust="spacingAndGlyphs">Who is doing it?</text>
<path d="M246.7,540.9 C238.7,539.58 242.7,538.5 225.7,538.5 H107.4" fill="none" stroke="#b098d8" stroke-width="1"/>
<rect x="114.7" y="523.2" width="1.1" height="12.6" fill="#303a30"/>
<path d="M115.8,523.3 H123.5 L115.8,530.5 Z" fill="#30b050"/>
<text x="131.2" y="531.5" font-size="9.6" fill="#3a3a44" textLength="85.5" lengthAdjust="spacingAndGlyphs">Who should be do it?</text>
<path d="M246.7,540.9 C238.7,552.78 242.7,562.5 225.7,562.5 H115.2" fill="none" stroke="#b098d8" stroke-width="1"/>
<rect x="121.6" y="547.2" width="1.1" height="12.6" fill="#303a30"/>
<path d="M122.69999999999999,547.3 H130.4 L122.69999999999999,554.5 Z" fill="#30b050"/>
<text x="137.3" y="555.5" font-size="9.6" fill="#3a3a44" textLength="80.1" lengthAdjust="spacingAndGlyphs">Who else can do it?</text>
<path d="M246.7,540.9 C238.7,565.98 242.7,586.5 225.7,586.5 H102.5" fill="none" stroke="#b098d8" stroke-width="1"/>
<rect x="108.8" y="571.2" width="1.1" height="12.6" fill="#303a30"/>
<path d="M109.89999999999999,571.3 H117.6 L109.89999999999999,578.5 Z" fill="#30b050"/>
<text x="124.1" y="579.5" font-size="9.6" fill="#3a3a44" textLength="93.3" lengthAdjust="spacingAndGlyphs">Who else should do it?</text>
<path d="M246.7,540.9 C238.7,579.18 242.7,610.5 225.7,610.5 H111" fill="none" stroke="#b098d8" stroke-width="1"/>
<rect x="116.7" y="595.2" width="1.1" height="12.6" fill="#303a30"/>
<path d="M117.8,595.3 H125.5 L117.8,602.5 Z" fill="#30b050"/>
<text x="134.4" y="603.5" font-size="9.6" fill="#3a3a44" textLength="81.6" lengthAdjust="spacingAndGlyphs">Who's doing 3-Mus?</text>
<rect x="251.5" y="528.5" width="62.0" height="26.0" rx="3.5" fill="#fff" stroke="#a890d0" stroke-width="1"/>
<text transform="translate(266.06,544.7) scale(0.953,1)" font-size="11.2" fill="#383838">W</text>
<text transform="translate(275.91,544.7) scale(0.863,1)" font-size="11.2" fill="#383838">H</text>
<text transform="translate(284.13,544.7) scale(0.902,1)" font-size="11.2" fill="#383838">O</text>
<text transform="translate(292.80,544.7) scale(0.876,1)" font-size="11.2" fill="#383838">?</text>
<circle cx="246.7" cy="540.9" r="3.7" fill="#d6f6b4" stroke="#5a9632" stroke-width="0.9"/>
<path d="M243.2,540.9 H250.2" stroke="#4a8a2a" stroke-width="1.1"/>
<path d="M670.1,541.1 C678.1,513.27 674.1,490.5 691.1,490.5 H780.7" fill="none" stroke="#58b098" stroke-width="1"/>
<rect x="696.8" y="475.2" width="1.1" height="12.6" fill="#806040"/>
<path d="M697.9,475.3 H705.5999999999999 L697.9,482.5 Z" fill="#f5a800"/>
<text x="712.1" y="483.5" font-size="9.6" fill="#3a3a44" textLength="59.3" lengthAdjust="spacingAndGlyphs">When to do it?</text>
<path d="M670.1,541.1 C678.1,526.47 674.1,514.5 691.1,514.5 H788.5" fill="none" stroke="#58b098" stroke-width="1"/>
<rect x="696.8" y="499.2" width="1.1" height="12.6" fill="#806040"/>
<path d="M697.9,499.3 H705.5999999999999 L697.9,506.5 Z" fill="#f5a800"/>
<text x="712" y="507.5" font-size="9.6" fill="#3a3a44" textLength="67.6" lengthAdjust="spacingAndGlyphs">When is it done?</text>
<path d="M670.1,541.1 C678.1,539.67 674.1,538.5 691.1,538.5 H825" fill="none" stroke="#58b098" stroke-width="1"/>
<rect x="696.8" y="523.2" width="1.1" height="12.6" fill="#806040"/>
<path d="M697.9,523.3 H705.5999999999999 L697.9,530.5 Z" fill="#f5a800"/>
<text x="714.3" y="531.5" font-size="9.6" fill="#3a3a44" textLength="100.0" lengthAdjust="spacingAndGlyphs">When should it be done?</text>
<path d="M670.1,541.1 C678.1,552.87 674.1,562.5 691.1,562.5 H829.4" fill="none" stroke="#58b098" stroke-width="1"/>
<rect x="696.8" y="547.2" width="1.1" height="12.6" fill="#806040"/>
<path d="M697.9,547.3 H705.5999999999999 L697.9,554.5 Z" fill="#f5a800"/>
<text x="712" y="555.5" font-size="9.6" fill="#3a3a44" textLength="108.5" lengthAdjust="spacingAndGlyphs">When else can it be done?</text>
<path d="M670.1,541.1 C678.1,566.07 674.1,586.5 691.1,586.5 H846.4" fill="none" stroke="#58b098" stroke-width="1"/>
<rect x="696.8" y="571.2" width="1.1" height="12.6" fill="#806040"/>
<path d="M697.9,571.3 H705.5999999999999 L697.9,578.5 Z" fill="#f5a800"/>
<text x="713.2" y="579.5" font-size="9.6" fill="#3a3a44" textLength="122.8" lengthAdjust="spacingAndGlyphs">When  else should it be done?</text>
<path d="M670.1,541.1 C678.1,579.27 674.1,610.5 691.1,610.5 H832.7" fill="none" stroke="#58b098" stroke-width="1"/>
<rect x="696.8" y="595.2" width="1.1" height="12.6" fill="#806040"/>
<path d="M697.9,595.3 H705.5999999999999 L697.9,602.5 Z" fill="#f5a800"/>
<text x="715.4" y="603.5" font-size="9.6" fill="#3a3a44" textLength="106.3" lengthAdjust="spacingAndGlyphs">Are there any time 3-Mus?</text>
<rect x="596.5" y="528.5" width="69.0" height="26.0" rx="3.5" fill="#fff" stroke="#50a888" stroke-width="1"/>
<text transform="translate(610.86,544.7) scale(0.962,1)" font-size="11.2" fill="#383838">W</text>
<text transform="translate(620.54,544.7) scale(0.831,1)" font-size="11.2" fill="#383838">H</text>
<text transform="translate(629.01,544.7) scale(0.756,1)" font-size="11.2" fill="#383838">E</text>
<text transform="translate(636.85,544.7) scale(0.926,1)" font-size="11.2" fill="#383838">N</text>
<text transform="translate(646.03,544.7) scale(0.802,1)" font-size="11.2" fill="#383838">?</text>
<circle cx="670.1" cy="541.1" r="3.7" fill="#d6f6b4" stroke="#5a9632" stroke-width="0.9"/>
<path d="M666.6,541.1 H673.6" stroke="#4a8a2a" stroke-width="1.1"/>
<path d="M762.3,156.5 C762.3,159.3 766.7,159.3 766.7,156.5" fill="none" stroke="#333" stroke-width="1"/>
</g>
</svg>
</body></html>
